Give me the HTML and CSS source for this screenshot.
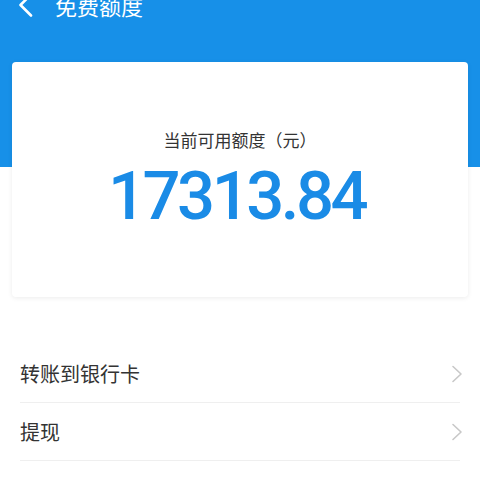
FILE: index.html
```html
<!DOCTYPE html>
<html lang="zh-CN">
<head>
<meta charset="utf-8">
<link rel="stylesheet" href="styles.css">
</head>
<body>
<div class="page">
  <div class="nav">
    <svg class="back" width="16" height="24" viewBox="0 0 16 24"><path d="M13 1.5 L2.5 12 L13 22.5" fill="none" stroke="#fff" stroke-width="2.6" stroke-linecap="round" stroke-linejoin="round"/></svg>
    <span class="title">免费额度</span>
  </div>
  <div class="card">
    <div class="label">当前可用额度（元）</div>
    <div class="amount">17313.84</div>
  </div>
  <div class="list">
    <div class="row"><span class="row-text">转账到银行卡</span><svg class="chev" width="12" height="18" viewBox="0 0 12 18"><path d="M2 1.5 L10 9 L2 16.5" fill="none" stroke="#c8c8c8" stroke-width="1.6" stroke-linecap="round" stroke-linejoin="round"/></svg></div>
    <div class="row"><span class="row-text">提现</span><svg class="chev" width="12" height="18" viewBox="0 0 12 18"><path d="M2 1.5 L10 9 L2 16.5" fill="none" stroke="#c8c8c8" stroke-width="1.6" stroke-linecap="round" stroke-linejoin="round"/></svg></div>
  </div>
</div>
</body>
</html>
```
FILE: styles.css
```css
html, body {
  margin: 0;
  padding: 0;
  background: #fff;
}
body {
  font-family: "Noto Sans CJK SC", "Noto Sans", sans-serif;
  width: 480px;
  height: 480px;
  overflow: hidden;
}
.page {
  background: linear-gradient(to bottom, #1790e8 0, #1790e8 167px, #fff 167px);
  min-height: 480px;
  overflow: hidden;
}
.nav {
  display: flex;
  align-items: center;
  height: 44px;
  margin-top: -17px;
  padding-left: 18px;
}
.back {
  display: block;
}
.title {
  color: #fff;
  font-size: 22px;
  line-height: 44px;
  margin-left: 21px;
}
.card {
  margin: 35px 12px 0;
  height: 235px;
  background: #fff;
  border-radius: 4px;
  box-shadow: 0 1px 5px rgba(0, 0, 0, 0.08);
  box-sizing: border-box;
  padding-top: 66px;
  text-align: center;
}
.label {
  font-size: 17px;
  line-height: 24px;
  color: #333;
}
.amount {
  margin-top: 9px;
  font-family: Roboto, "Liberation Sans", sans-serif;
  font-weight: 500;
  font-size: 67px;
  line-height: 70px;
  letter-spacing: -3.5px;
  color: #1a8be6;
  padding-right: 7px;
}
.list {
  margin-top: 48px;
  padding: 0 20px;
}
.row {
  display: flex;
  align-items: center;
  justify-content: space-between;
  height: 57px;
  border-bottom: 1px solid #efefef;
}
.row-text {
  font-size: 20px;
  color: #333;
}
.chev {
  display: block;
  margin-right: -3px;
}
```
